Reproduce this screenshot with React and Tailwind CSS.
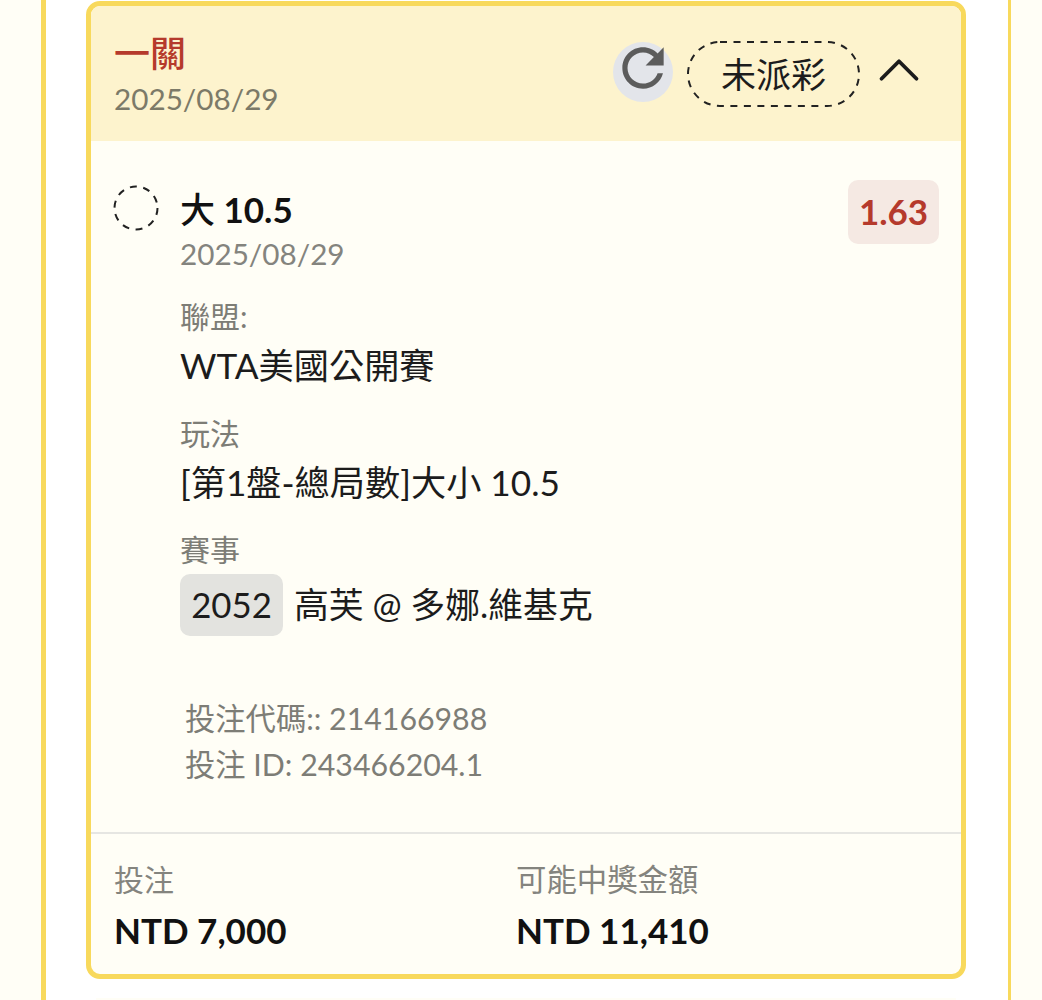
import { ChevronUp } from 'lucide-react';

const Field = ({ label, children, className = '' }) => (
  <div className={className}>
    <div className="text-[30px] leading-[46px] text-[#7d7d76]">{label}</div>
    <div className="text-[35.2px] leading-[52px] text-[#1c1c1c]">{children}</div>
  </div>
);

const App = () => {
  return (
    <div className="h-[1000px] overflow-hidden bg-[#fffef6] pl-[41px] pr-[31px] font-['Lato','Noto_Sans_CJK_TC',sans-serif]">
      <div className="h-full overflow-hidden border-l-[5px] border-r-[3px] border-[#f8d95c] bg-white pl-[40px] pr-[42px] pt-[1px]">
        <div className="h-[978px] overflow-hidden rounded-[14px] border-[5px] border-[#f8d95c] bg-[#fffef6]">
          {/* header */}
          <div className="flex h-[135px] items-start justify-between bg-[#fdf3cd] pl-[23px] pr-[27px]">
            <div className="pt-[25px]">
              <div className="text-[36px] font-medium leading-[44px] text-[#b53a2c]">一關</div>
              <div className="mt-[3px] text-[29.7px] leading-[42px] text-[#7c7a68]">2025/08/29</div>
            </div>
            <div className="flex items-center pt-[29px]">
              <div className="mb-[5px] flex h-[60px] w-[60px] items-center justify-center rounded-full bg-[#e3e5ea]">
                <svg viewBox="0 0 24 24" className="mb-[8px] h-[62px] w-[62px] shrink-0" fill="#5c5c5c">
                  <path d="M17.65 6.35C16.2 4.9 14.21 4 12 4c-4.42 0-7.99 3.58-7.99 8s3.57 8 7.99 8c3.73 0 6.84-2.55 7.73-6h-2.08c-.82 2.33-3.04 4-5.65 4-3.31 0-6-2.69-6-6s2.69-6 6-6c1.66 0 3.14.69 4.22 1.78L13 11h7V4l-2.35 2.35z" />
                </svg>
              </div>
              <div className="relative ml-[14px] flex h-[66px] w-[173px] items-center justify-center text-[35px] text-[#1c1c1c]">
                <svg viewBox="0 0 173 66" className="absolute inset-0 h-full w-full" fill="none" stroke="#222" strokeWidth="2">
                  <rect x="1" y="1" width="171" height="64" rx="32" strokeDasharray="7 6.5" />
                </svg>
                未派彩
              </div>
              <ChevronUp className="mb-[8px] ml-[4px] h-[70px] w-[70px] text-[#1c1c1c]" strokeWidth={1.3} />
            </div>
          </div>

          {/* selection */}
          <div className="h-[693px] border-b-2 border-[#e6e6e2] pl-[22px] pr-[22px] pt-[39px]">
            <div className="flex items-start">
              <svg viewBox="0 0 46 46" className="mt-[5px] h-[46px] w-[46px] shrink-0" fill="none" stroke="#222" strokeWidth="2">
                <circle cx="23" cy="23" r="21.5" strokeDasharray="7 6.5" />
              </svg>
              <div className="ml-[21px] flex-1">
                <div className="flex items-start justify-between">
                  <div className="pt-[7px]">
                    <div className="text-[35px] font-bold leading-[44px] text-[#111]">
                      <span className="font-medium">大</span> 10.5
                    </div>
                    <div className="text-[29.7px] leading-[46px] text-[#84847e]">2025/08/29</div>
                  </div>
                  <div className="flex h-[64px] w-[91px] items-center justify-center rounded-[10px] bg-[#f5e9e3] pb-[2px] text-[35px] font-bold text-[#b53a2c]">
                    1.63
                  </div>
                </div>
                <Field label="聯盟:" className="mt-[16px]">WTA美國公開賽</Field>
                <Field label="玩法" className="mt-[19px]">[第1盤-總局數]大小 10.5</Field>
                <div className="mt-[18px]">
                  <div className="text-[30px] leading-[46px] text-[#7d7d76]">賽事</div>
                  <div className="mt-[2px] flex items-center text-[34.8px] text-[#1c1c1c]">
                    <span className="flex h-[62px] w-[103px] items-center justify-center rounded-[10px] bg-[#e3e3df]">2052</span>
                    <span className="ml-[11px]">高芙 @ 多娜.維基克</span>
                  </div>
                </div>
              </div>
            </div>
            <div className="mt-[59px] pl-[72px] text-[30.3px] leading-[46px] text-[#7d7d76]">
              <div>投注代碼:: 214166988</div>
              <div>投注 ID: 243466204.1</div>
            </div>
          </div>

          {/* totals */}
          <div className="flex pl-[23px] pt-[23px]">
            <div className="w-[402px]">
              <div className="text-[30px] leading-[44px] text-[#84847e]">投注</div>
              <div className="mt-[6px] text-[35px] font-bold leading-[46px] text-[#111]">NTD 7,000</div>
            </div>
            <div>
              <div className="text-[30.4px] leading-[44px] text-[#84847e]">可能中獎金額</div>
              <div className="mt-[6px] text-[35px] font-bold leading-[46px] text-[#111]">NTD 11,410</div>
            </div>
          </div>
        </div>
        {/* top edge of the next card */}
        <div className="mx-[10px] mt-[19px] h-[10px] bg-[#fffef6]" />
      </div>
    </div>
  );
};

export default App;
